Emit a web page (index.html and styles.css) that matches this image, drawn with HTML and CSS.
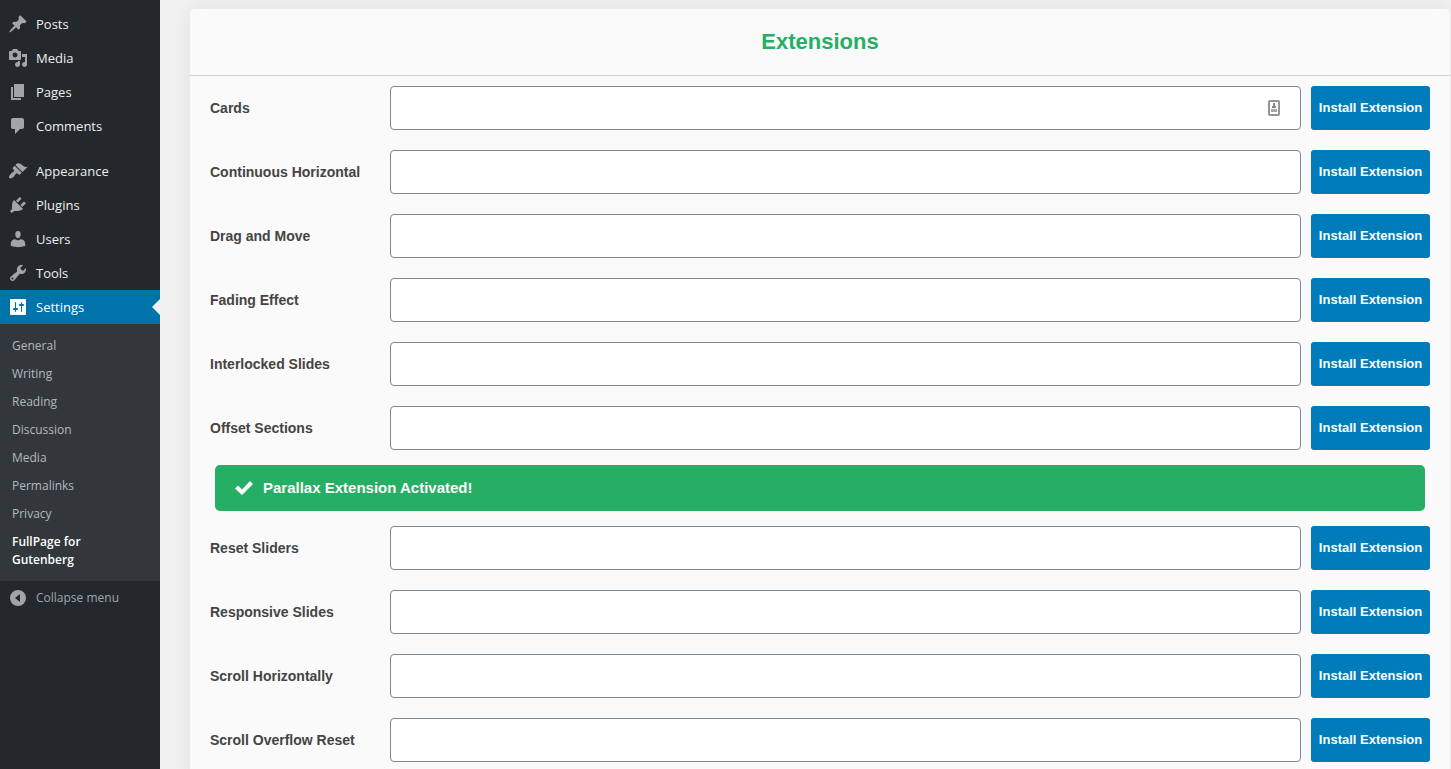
FILE: index.html
```html
<!DOCTYPE html>
<html lang="en">
<head>
<meta charset="utf-8">
<meta name="viewport" content="width=device-width, initial-scale=1">
<title>FullPage for Gutenberg</title>
<link rel="stylesheet" href="styles.css">
</head>
<body>
<div class="shell">
  <nav class="sidebar" aria-label="Main menu">
    <ul class="menu">
      <li><a class="menu-link" href="#"><svg class="icon" viewBox="0 0 20 20"><path d="M10.44 3.02l1.82-1.82 6.36 6.35-1.83 1.82c-1.05-.68-2.48-.57-3.41.36l-.75.75c-.92.93-1.04 2.35-.35 3.41l-1.83 1.82-2.41-2.41-2.8 2.79c-.42.42-3.38 2.71-3.8 2.29s1.86-3.39 2.28-3.81l2.79-2.79L4.1 9.36l1.83-1.82c1.05.69 2.48.57 3.4-.36l.75-.75c.93-.92 1.05-2.35.36-3.41z"/></svg>Posts</a></li>
      <li><a class="menu-link" href="#"><svg class="icon" viewBox="0 0 20 20"><path d="M13 11V4c0-.55-.45-1-1-1h-1.67L9 1H5L3.67 3H2c-.55 0-1 .45-1 1v7c0 .55.45 1 1 1h10c.55 0 1-.45 1-1zM7 4.5c1.38 0 2.5 1.12 2.5 2.5S8.38 9.5 7 9.5 4.5 8.38 4.5 7 5.62 4.5 7 4.5zM14 6h5v10.5c0 1.38-1.12 2.5-2.5 2.5S14 17.88 14 16.5s1.12-2.5 2.5-2.5c.17 0 .34.02.5.05V9h-3V6zm-4 8.05V13h2v3.5c0 1.38-1.12 2.5-2.5 2.5S7 17.88 7 16.5 8.12 14 9.5 14c.17 0 .34.02.5.05z"/></svg>Media</a></li>
      <li><a class="menu-link" href="#"><svg class="icon" viewBox="0 0 20 20"><path d="M6 15V2h10v13H6zm-1 1h8v2H3V5h2v11z"/></svg>Pages</a></li>
      <li><a class="menu-link" href="#"><svg class="icon" viewBox="0 0 20 20"><path d="M5 2h9c1.1 0 2 .9 2 2v7c0 1.1-.9 2-2 2h-2l-5 5v-5H5c-1.1 0-2-.9-2-2V4c0-1.1.9-2 2-2z"/></svg>Comments</a></li>
      <li class="menu-group"><a class="menu-link" href="#"><svg class="icon" viewBox="0 0 20 20"><path d="M14.48 11.06L7.41 3.99l1.5-1.5c.5-.56 2.3-.47 3.51.32 1.21.8 1.43 1.28 2.91 2.1 1.18.64 2.45 1.26 4.45.85zm-.71.71L6.7 4.7 4.93 6.47c-.39.39-.39 1.02 0 1.41l1.06 1.06c.39.39.39 1.03 0 1.42-.6.6-1.43 1.11-2.21 1.69-.35.26-.7.53-1.01.84C1.43 14.23.4 16.08 1.4 17.07c.99 1 2.84-.03 4.18-1.36.31-.31.58-.66.85-1.02.57-.78 1.08-1.61 1.69-2.21.39-.39 1.02-.39 1.41 0l1.06 1.06c.39.39 1.02.39 1.41 0z"/></svg>Appearance</a></li>
      <li><a class="menu-link" href="#"><svg class="icon" viewBox="0 0 20 20"><path d="M13.11 4.36L9.87 7.6 8 5.73l3.24-3.24c.35-.34 1.05-.2 1.56.32.52.51.66 1.21.31 1.55zm-8 1.77l.91-1.12 9.01 9.01-1.19.84c-.71.71-2.63 1.16-3.82 1.16H6.14L4.9 17.26c-.59.59-1.54.59-2.12 0-.59-.58-.59-1.53 0-2.12l1.24-1.24v-3.88c0-1.13.4-3.19 1.09-3.89zm7.26 3.97l3.24-3.24c.34-.35 1.04-.21 1.55.31.52.51.66 1.21.31 1.55l-3.24 3.25z"/></svg>Plugins</a></li>
      <li><a class="menu-link" href="#"><svg class="icon" viewBox="0 0 20 20"><path d="M10 9.25c-2.27 0-2.73-3.44-2.73-3.44C7 4.02 7.82 2 9.97 2c2.16 0 2.98 2.02 2.71 3.81 0 0-.41 3.44-2.68 3.44zM7.3 10.2L10 11.6l2.7-1.4c2.4 0 4.54 2.1 4.54 4.33v2.49s-3.65 1.13-7.24 1.13c-3.65 0-7.24-1.13-7.24-1.13v-2.49c0-2.25 2.01-4.33 4.54-4.33z"/></svg>Users</a></li>
      <li><a class="menu-link" href="#"><svg class="icon" viewBox="0 0 20 20"><path d="M16.68 9.77c-1.34 1.34-3.3 1.67-4.95.99l-5.41 6.52c-.99.99-2.59.99-3.58 0s-.99-2.59 0-3.57l6.52-5.42c-.68-1.65-.35-3.61.99-4.95 1.28-1.28 3.12-1.62 4.72-1.06l-2.89 2.89 2.82 2.82 2.86-2.87c.53 1.58.18 3.39-1.08 4.65zM3.81 16.21c.4.39 1.04.39 1.43 0 .4-.4.4-1.04 0-1.43-.39-.4-1.03-.4-1.43 0-.39.39-.39 1.03 0 1.43z"/></svg>Tools</a></li>
      <li>
        <a class="menu-link menu-link-current" href="#"><svg class="icon" viewBox="0 0 20 20"><path d="M18 17V3c0-.55-.45-1-1-1H3c-.55 0-1 .45-1 1v14c0 .55.45 1 1 1h14c.55 0 1-.45 1-1zM8 11h1c.55 0 1 .45 1 1s-.45 1-1 1H8v1.5c0 .28-.22.5-.5.5s-.5-.22-.5-.5V13H6c-.55 0-1-.45-1-1s.45-1 1-1h1V5.5c0-.28.22-.5.5-.5s.5.22.5.5V11zm5-2h-1c-.55 0-1-.45-1-1s.45-1 1-1h1V5.5c0-.28.22-.5.5-.5s.5.22.5.5V7h1c.55 0 1 .45 1 1s-.45 1-1 1h-1v5.5c0 .28-.22.5-.5.5s-.5-.22-.5-.5V9z"/></svg>Settings</a>
        <ul class="submenu">
          <li><a class="submenu-link" href="#">General</a></li>
          <li><a class="submenu-link" href="#">Writing</a></li>
          <li><a class="submenu-link" href="#">Reading</a></li>
          <li><a class="submenu-link" href="#">Discussion</a></li>
          <li><a class="submenu-link" href="#">Media</a></li>
          <li><a class="submenu-link" href="#">Permalinks</a></li>
          <li><a class="submenu-link" href="#">Privacy</a></li>
          <li><a class="submenu-link submenu-link-current" href="#" aria-current="page">FullPage for Gutenberg</a></li>
        </ul>
      </li>
    </ul>
    <button class="menu-link collapse" type="button"><svg class="icon" viewBox="0 0 20 20"><path fill-rule="evenodd" d="M10 2a8 8 0 1 0 0 16 8 8 0 0 0 0-16zm2 12l-5-4 5-4z"/></svg>Collapse menu</button>
  </nav>

  <main class="content">
    <section class="card">
      <header class="card-header"><h2 class="card-title">Extensions</h2></header>
      <div class="rows">
        <form class="row">
          <label class="label" for="cards">Cards</label>
          <div class="field">
            <input class="input" id="cards" type="text">
            <svg class="autofill" viewBox="0 0 12 16"><rect x="1" y="1" width="10" height="14" rx="1" fill="#fff" stroke="#949494" stroke-width="2"/><path fill="#858585" d="M5 3h2v3h1v2H4V6h1z"/><path fill="#a8a8a8" d="M3 9h6v3H3z"/></svg>
          </div>
          <button class="install" type="button">Install Extension</button>
        </form>
        <form class="row"><label class="label" for="continuous">Continuous Horizontal</label><input class="input" id="continuous" type="text"><button class="install" type="button">Install Extension</button></form>
        <form class="row"><label class="label" for="drag">Drag and Move</label><input class="input" id="drag" type="text"><button class="install" type="button">Install Extension</button></form>
        <form class="row"><label class="label" for="fading">Fading Effect</label><input class="input" id="fading" type="text"><button class="install" type="button">Install Extension</button></form>
        <form class="row"><label class="label" for="interlocked">Interlocked Slides</label><input class="input" id="interlocked" type="text"><button class="install" type="button">Install Extension</button></form>
        <form class="row"><label class="label" for="offset">Offset Sections</label><input class="input" id="offset" type="text"><button class="install" type="button">Install Extension</button></form>
        <p class="notice" role="status"><svg class="check" viewBox="0 0 18 14"><path d="M0 7.5L3 4.5l4 4L15 0l3 3L7 14z"/></svg>Parallax Extension Activated!</p>
        <form class="row"><label class="label" for="reset">Reset Sliders</label><input class="input" id="reset" type="text"><button class="install" type="button">Install Extension</button></form>
        <form class="row"><label class="label" for="responsive">Responsive Slides</label><input class="input" id="responsive" type="text"><button class="install" type="button">Install Extension</button></form>
        <form class="row"><label class="label" for="horizontal">Scroll Horizontally</label><input class="input" id="horizontal" type="text"><button class="install" type="button">Install Extension</button></form>
        <form class="row"><label class="label" for="overflow">Scroll Overflow Reset</label><input class="input" id="overflow" type="text"><button class="install" type="button">Install Extension</button></form>
      </div>
    </section>
  </main>
</div>
</body>
</html>
```
FILE: styles.css
```css
* {
  box-sizing: border-box;
}

body {
  margin: 0;
  background: #f1f1f1;
  color: #444;
  font-family: "Liberation Sans", Arial, sans-serif;
}

.shell {
  display: flex;
  height: 100vh;
  overflow: hidden;
}

/* Sidebar */
.sidebar {
  flex: 0 0 160px;
  padding-top: 7px;
  background: #23282d;
  font-family: "Segoe UI", "Open Sans", sans-serif;
}

.menu,
.submenu {
  margin: 0;
  padding: 0;
  list-style: none;
}

.menu-group {
  margin-top: 11px;
}

.menu-link {
  position: relative;
  display: flex;
  align-items: center;
  gap: 8px;
  height: 34px;
  padding-left: 8px;
  color: #eee;
  font-size: 13px;
  line-height: 18px;
  text-decoration: none;
}

.icon {
  flex: none;
  width: 20px;
  height: 20px;
  fill: #a0a5aa;
}

.menu-link-current {
  background: #0073aa;
  color: #fff;
}

.menu-link-current .icon {
  fill: #fff;
}

.menu-link-current::after {
  content: "";
  position: absolute;
  top: 9px;
  right: 0;
  border: 8px solid transparent;
  border-left-width: 0;
  border-right-color: #f1f1f1;
}

.submenu {
  padding: 8px 0 7px;
  background: #32373c;
}

.submenu-link {
  display: block;
  padding: 5px 12px;
  color: #b4b9be;
  font-size: 12px;
  line-height: 18px;
  text-decoration: none;
}

.submenu-link-current {
  max-width: 120px;
  color: #fff;
  font-weight: 600;
}

.collapse {
  width: 100%;
  border: 0;
  background: none;
  color: #a0a5aa;
  font-family: inherit;
  font-size: 12px;
}

/* Extensions card */
.content {
  flex: 1;
  min-width: 0;
  padding: 9px 1px 0 30px;
}

.card {
  border-radius: 5px;
  background: #fafafa;
  box-shadow: 0 0 20px rgba(0, 0, 0, 0.07);
}

.card-header {
  padding: 20px;
  border-bottom: 1px solid #d0d3d5;
}

.card-title {
  margin: 0;
  color: #27ae65;
  font-size: 22px;
  line-height: 26px;
  text-align: center;
}

.rows {
  display: flex;
  flex-direction: column;
  padding: 0 20px 10px;
}

.row {
  display: grid;
  grid-template-columns: 170px minmax(0, 1fr) 119px;
  gap: 10px;
  align-items: center;
  padding: 10px 0;
}

.label {
  font-size: 14px;
  font-weight: 700;
  line-height: 20px;
}

.field {
  position: relative;
  display: flex;
}

.input {
  width: 100%;
  height: 44px;
  padding: 0 8px;
  border: 1px solid #7e8993;
  border-radius: 4px;
  background: #fff;
  font-size: 14px;
}

.autofill {
  position: absolute;
  top: 14px;
  right: 21px;
  width: 12px;
  height: 16px;
}

.install {
  height: 44px;
  padding: 0 0 2px;
  border: 0;
  border-radius: 3px;
  background: #007cba;
  color: #fff;
  font-family: inherit;
  font-size: 13px;
  font-weight: 700;
}

.notice {
  display: flex;
  align-items: center;
  gap: 10px;
  margin: 5px;
  padding: 13px 20px;
  border-radius: 5px;
  background: #27ae65;
  color: #fafafa;
  font-size: 15px;
  font-weight: 700;
  line-height: 20px;
}

.check {
  width: 18px;
  height: 14px;
  fill: #fafafa;
}
```
